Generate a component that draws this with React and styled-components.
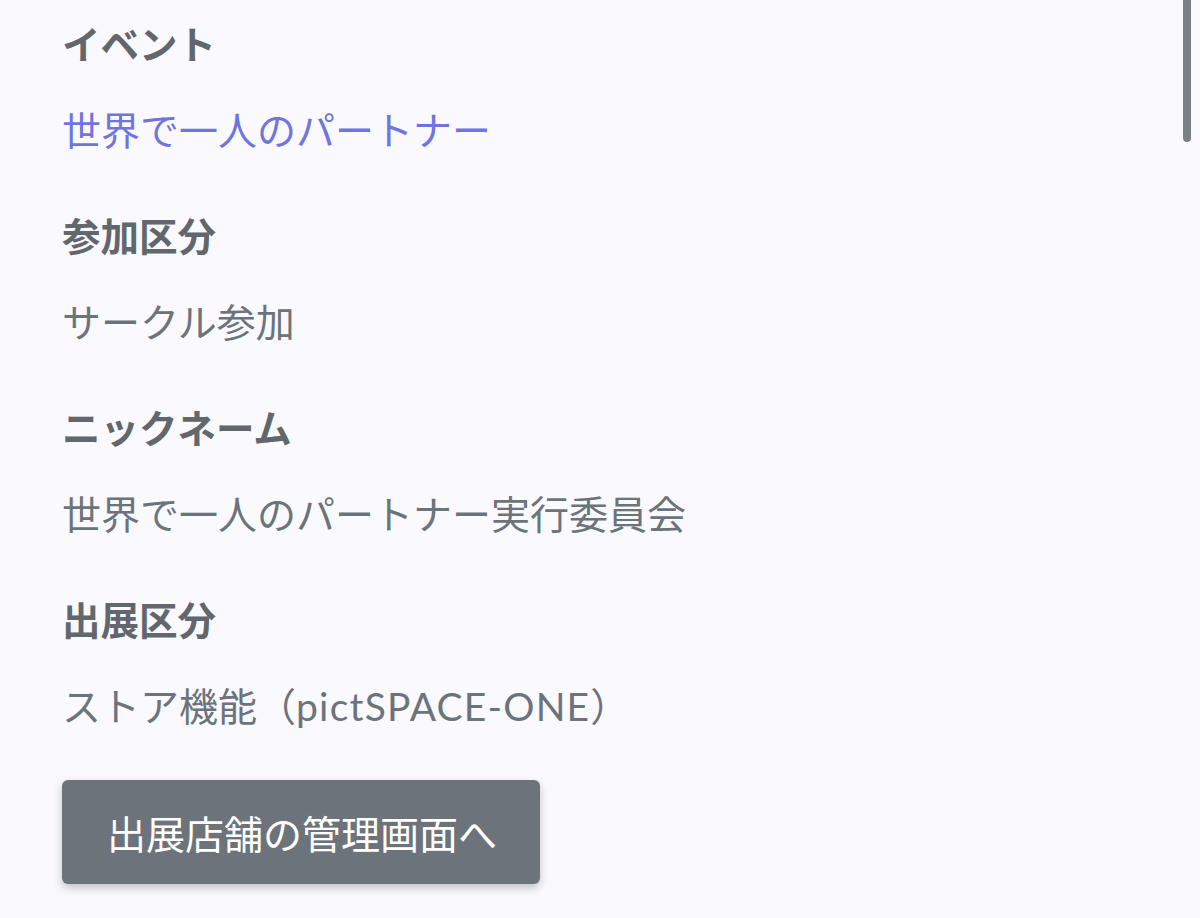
import React from "react";
import styled, { createGlobalStyle } from "styled-components";

const Global = createGlobalStyle`
  html, body { margin: 0; padding: 0; background: #f9f9fe; overflow: hidden; }
  body { font-family: Lato, "Noto Sans CJK JP", sans-serif; }
`;

const Page = styled.div`
  position: relative;
  width: 1200px;
  height: 918px;
  box-sizing: border-box;
  padding: 16px 0 0 62px;
  display: flex;
  flex-direction: column;
`;

const Field = styled.section`
  display: flex;
  flex-direction: column;
  gap: 30px;
  margin-bottom: 50px;
  &:last-of-type { margin-bottom: 46px; }
`;

const Label = styled.h3`
  margin: 0;
  font-size: 38.5px;
  line-height: 56px;
  font-weight: 700;
  color: #61676d;
`;

const Value = styled.div`
  font-size: 39px;
  line-height: 56px;
  font-weight: 400;
  color: ${(p) => (p.$link ? "#6f74e0" : "#6c747b")};
`;

const Latin = styled.span`
  letter-spacing: 1.2px;
`;

const Button = styled.button`
  align-self: flex-start;
  width: 478px;
  height: 104px;
  margin: 0;
  padding: 0 0 0 45px;
  text-align: left;
  border: none;
  border-radius: 6px;
  background: #6c737b;
  color: #ffffff;
  font-family: Lato, "Noto Sans CJK JP", sans-serif;
  font-size: 39px;
  box-shadow: 0 4px 10px rgba(0, 0, 0, 0.22);
`;

const ScrollThumb = styled.div`
  position: absolute;
  top: -6px;
  right: 9px;
  width: 8px;
  height: 148px;
  border-radius: 4px;
  background: #7a8087;
`;

const fields = [
  { label: "イベント", value: "世界で一人のパートナー", link: true },
  { label: "参加区分", value: "サークル参加" },
  { label: "ニックネーム", value: "世界で一人のパートナー実行委員会" },
  {
    label: "出展区分",
    value: (
      <>
        ストア機能（<Latin>pictSPACE-ONE</Latin>）
      </>
    ),
  },
];

export default function App() {
  return (
    <>
      <Global />
      <Page>
        {fields.map((f) => (
          <Field key={f.label}>
            <Label>{f.label}</Label>
            <Value $link={f.link}>{f.value}</Value>
          </Field>
        ))}
        <Button>出展店舗の管理画面へ</Button>
        <ScrollThumb />
      </Page>
    </>
  );
}
